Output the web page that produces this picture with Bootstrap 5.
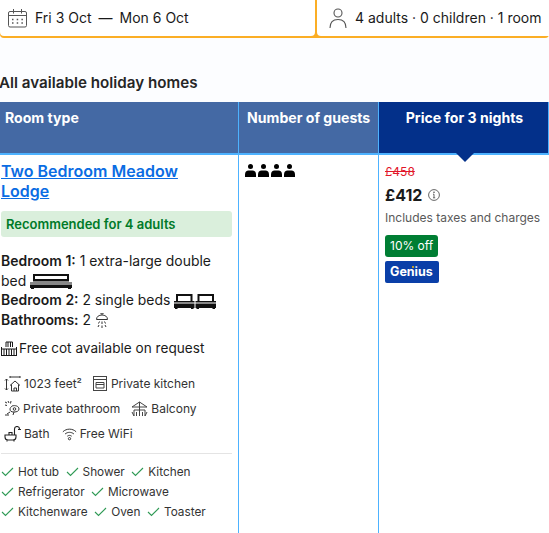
<!DOCTYPE html>
<html lang="en">
<head>
<meta charset="utf-8">
<title>Holiday homes</title>
<link href="https://cdn.jsdelivr.net/npm/bootstrap@5.3.0/dist/css/bootstrap.min.css" rel="stylesheet">
<style>
html,body{margin:0;height:533px;overflow:hidden}
body{font-family:Inter,"Liberation Sans",sans-serif;background:#fcfdff;color:#1a1a1a;font-size:14px;line-height:20px;width:549px}
svg{display:inline-block;flex:none}
.topbar{height:38px;background:#fbae25;padding-bottom:2px;gap:2px;color:#1a1a1a;border-radius:0 0 4px 4px}
.seg-a{width:315px;padding-left:8px;gap:8px;background:#fff;border-radius:0 0 4px 4px}
.seg-b{flex:1;padding-left:12px;gap:8px;white-space:nowrap;background:#fff;border-radius:0 0 0 4px}
.dash{margin:0 7px}
.heading{font-size:15.2px;line-height:20px;font-weight:600;color:#262626;margin:35px 0 9px -1px;white-space:nowrap;height:20px}
.tbl{display:grid;grid-template-columns:239px 140px 170px;grid-template-rows:53px 378px}
.cell{border-right:1px solid #4db2ff;min-width:0;position:relative}
.cell:last-child{border-right:0}
.hd{background:#4469a4;color:#fff;font-weight:700;font-size:14.1px;line-height:20px;padding:6px 5px;border-bottom:2px solid #4db2ff;white-space:nowrap}
.hd-guests{padding-left:8px}
.hd-price{background:#03308a;text-align:center;padding-left:6px;padding-right:4px;z-index:1}
.notch{position:absolute;left:77px;bottom:-9px;width:0;height:0;border-left:9px solid transparent;border-right:9px solid transparent;border-top:9px solid #03308a}
.body-cell{background:#fff}
.col-room{padding:6px 6px 0 1px}
.room-link{font-size:16px;line-height:20px;font-weight:600;color:#0a6ce3;text-decoration:underline;display:block;width:190px}
.reco{background:#daefdc;color:#007a28;font-weight:600;font-size:13px;line-height:26px;height:26px;border-radius:3px;padding-left:5px;margin:10px 0 14px}
.beds{font-size:13.95px;line-height:19.5px}
.beds b{font-weight:600}
.cot{margin-top:9px;display:flex;align-items:center;gap:2px;white-space:nowrap;font-size:13.6px}
.facts{margin-top:13px;font-size:12px;line-height:25px;color:#333;padding-left:3px}
.fact-row{display:flex;gap:11px;white-space:nowrap}
.fact{display:flex;align-items:center;gap:3px}
.kitchen-label{margin-left:1px}
.wifi-item{margin-left:1px}
.rule{border-top:1px solid #e4e4e4;margin:7px 0 8px}
.ticks{font-size:11.8px;line-height:20px;color:#333}
.tick-row{display:flex;gap:6.5px;white-space:nowrap}
.tick{display:flex;align-items:center;gap:4px}
.col-guests{padding:9px 0 0 6px;display:flex;align-items:flex-start;gap:2px}
.col-price{padding:8px 0 0 6px}
.old{color:#e2162a;font-size:12px;line-height:17px;text-decoration:line-through}
.now{font-size:16px;line-height:22px;font-weight:700;color:#1a1a1a;margin-top:4px;gap:6px}
.taxes{font-size:12px;line-height:18px;color:#595959;margin-top:3px}
.off{display:table;background:#007e33;color:#fff;font-size:12px;line-height:22px;padding:0 5px;border-radius:3px;margin-top:8px}
.gen{display:table;position:relative;background:#0a3fa8;color:#fff;font-size:12.5px;line-height:22px;font-weight:700;padding:0 5px;border-radius:2px;margin-top:4px;width:54px}
.gen-dot{position:absolute;left:27px;top:5px;width:2px;height:2px;border-radius:50%;background:#febb02}
</style>
</head>
<body>
<div class="topbar d-flex">
  <div class="seg-a d-flex align-items-center">
    <svg width="19" height="20" viewBox="0 0 19 20" fill="none" stroke="#555" stroke-width="1"><rect x=".5" y="3.500" width="18" height="15.500" rx="1.500"/><path d="M.5 7.500h18M5.500 1v4.500M13.500 1v4.500"/><path d="M4 11.500h1.500M8.700 11.500h1.500M13.400 11.500h1.500M4 15h1.500M8.700 15h1.500M13.400 15h1.500" stroke-width="1.300"/></svg>
    <span>Fri 3 Oct<span class="dash">—</span>Mon 6 Oct</span>
  </div>
  <div class="seg-b d-flex align-items-center">
    <svg width="18" height="22" viewBox="0 0 18 22" fill="none" stroke="#555" stroke-width="1.100"><circle cx="9" cy="6" r="4"/><path d="M1 21c0-6 3-8.500 8-8.500s8 2.500 8 8.500"/></svg>
    <span>4 adults · 0 children · 1 room</span>
  </div>
</div>
<h2 class="heading">All available holiday homes</h2>
<div class="tbl">
  <div class="cell hd">Room type</div>
  <div class="cell hd hd-guests">Number of guests</div>
  <div class="cell hd hd-price">Price for 3 nights<span class="notch"></span></div>

  <div class="cell body-cell col-room">
    <a class="room-link" href="#">Two Bedroom Meadow Lodge</a>
    <div class="reco">Recommended for 4 adults</div>
    <div class="beds">
      <b>Bedroom 1:</b> 1 extra-large double<br>bed
      <svg width="42" height="15" viewBox="0 0 42 15" fill="#111"><path d="M3 0h36v2H3zM3 1h2v6H3zM37 1h2v6h-2zM3 5h36v2.500H3zM0 8.500h42v1H0zM0 10.500h42V14H0zM1 13h3v2H1zM38 13h3v2h-3z"/></svg><br>
      <b>Bedroom 2:</b> 2 single beds
      <svg width="42" height="15" viewBox="0 0 42 15" fill="#111"><path d="M2 0h16.500v2H2zM2 1h2v6H2zM16.500 1h2v6h-2zM0 7h20.500v1.500H0zM0 9.500h20.500V14H0zM1 13h2.500v2H1zM17 13h2.500v2H17zM23.500 0H40v2H23.500zM23.500 1h2v6h-2zM38 1h2v6h-2zM21.500 7H42v1.500H21.500zM21.500 9.500H42V14H21.500zM22.500 13H25v2h-2.500zM38.500 13H41v2h-2.500z"/></svg><br>
      <b>Bathrooms:</b> 2
      <svg width="14" height="15" viewBox="0 0 14 15" fill="none" stroke="#333" stroke-width="1"><path d="M5 0h4M7 0v2M1.500 6.500C1.500 3.500 4 2 7 2s5.500 1.500 5.500 4.500zM4.500 8.500l-1 2M4 12l-1 2M7 8.500V11M7 12.500V15M9.500 8.500l1 2M10 12l1 2"/></svg>
    </div>
    <div class="cot">
      <svg width="16" height="15" viewBox="0 0 16 15" fill="none" stroke="#1a1a1a" stroke-width="1"><path d="M.5 6v9M15.500 6v9M.5 8h15M.5 14.500h15M3 8v6M5.500 8v6M8 8v6M10.500 8v6M13 8v6M5 6V1h6.500v5M7 1v5M9.500 1v5"/></svg>
      <span>Free cot available on request</span>
    </div>
    <div class="facts">
      <div class="fact-row">
        <span class="fact"><svg width="17" height="16" viewBox="0 0 17 16" fill="none" stroke="#333" stroke-width="1"><path d="M2.500 3v11M1 4.500 2.500 3 4 4.500M1 12.500 2.500 14 4 12.500M6 1h10M6 0v2M16 0v2M6 9.500 11 5l5 4.500M7.500 8.500V15h7V8.500M10 15v-3h2.500v3"/></svg>1023 feet²</span>
        <span class="fact"><svg width="14" height="15" viewBox="0 0 14 15" fill="none" stroke="#444" stroke-width="1"><rect x=".5" y=".5" width="13" height="14"/><path d="M.5 3.500h13M3 6.500h8v5.500H3zM3 8.500h8"/></svg><span class="kitchen-label">Private kitchen</span></span>
      </div>
      <div class="fact-row">
        <span class="fact"><svg width="16" height="15" viewBox="0 0 16 15" fill="none" stroke="#333" stroke-width="1"><path d="M1 1l2 1M4 0l1 2M7 0 6.500 2.500M1 4l2 .5M8 5c3-1 7 0 7 3 0 2-2 3-5 3-3 0-4-1-4-3 0-1 1-2 2-3zM6 11l-3 2M10 11l-1 3M5 14H1"/><circle cx="10.500" cy="8" r="1.300"/></svg>Private bathroom</span>
        <span class="fact"><svg width="17" height="16" viewBox="0 0 17 16" fill="none" stroke="#444" stroke-width="1"><path d="M1 6 8.500 1 16 6zM8.500 1v14M3 9h11M3 9v6M14 9v6M5.500 11v4M11.500 11v4M1 11l2 4M16 11l-2 4"/></svg>Balcony</span>
      </div>
      <div class="fact-row">
        <span class="fact"><svg width="17" height="16" viewBox="0 0 17 16" fill="none" stroke="#222" stroke-width="1.100"><path d="M1 9h11v2c0 2-1 3-3 3H4c-2 0-3-1-3-3zM3 14v1.500M10 14v1.500M10.500 9V3c0-1.500 1-2.500 2.500-2.500S15.500 1.500 15.500 3M14 3.500h3M5 9V6.500h3V9"/></svg>Bath</span>
        <span class="fact wifi-item"><svg width="15" height="14" viewBox="0 0 17 15" fill="none" stroke="#333" stroke-width="1.100"><path d="M1 5c4-4 11-4 15 0M3.500 7.500c3-2.500 7-2.500 10 0M6 10c1.500-1.200 3.500-1.200 5 0"/><circle cx="8.500" cy="12.800" r="1.300"/></svg>Free WiFi</span>
      </div>
    </div>
    <div class="rule"></div>
    <div class="ticks">
      <div class="tick-row">
        <span class="tick"><svg width="13" height="10" viewBox="0 0 13 10" fill="none" stroke="#2f9a55" stroke-width="1.100"><path d="M1 5l3.500 3.500L12 1"/></svg>Hot tub</span>
        <span class="tick"><svg width="13" height="10" viewBox="0 0 13 10" fill="none" stroke="#2f9a55" stroke-width="1.100"><path d="M1 5l3.500 3.500L12 1"/></svg>Shower</span>
        <span class="tick"><svg width="13" height="10" viewBox="0 0 13 10" fill="none" stroke="#2f9a55" stroke-width="1.100"><path d="M1 5l3.500 3.500L12 1"/></svg>Kitchen</span>
      </div>
      <div class="tick-row">
        <span class="tick"><svg width="13" height="10" viewBox="0 0 13 10" fill="none" stroke="#2f9a55" stroke-width="1.100"><path d="M1 5l3.500 3.500L12 1"/></svg>Refrigerator</span>
        <span class="tick"><svg width="13" height="10" viewBox="0 0 13 10" fill="none" stroke="#2f9a55" stroke-width="1.100"><path d="M1 5l3.500 3.500L12 1"/></svg>Microwave</span>
      </div>
      <div class="tick-row">
        <span class="tick"><svg width="13" height="10" viewBox="0 0 13 10" fill="none" stroke="#2f9a55" stroke-width="1.100"><path d="M1 5l3.500 3.500L12 1"/></svg>Kitchenware</span>
        <span class="tick"><svg width="13" height="10" viewBox="0 0 13 10" fill="none" stroke="#2f9a55" stroke-width="1.100"><path d="M1 5l3.500 3.500L12 1"/></svg>Oven</span>
        <span class="tick"><svg width="13" height="10" viewBox="0 0 13 10" fill="none" stroke="#2f9a55" stroke-width="1.100"><path d="M1 5l3.500 3.500L12 1"/></svg>Toaster</span>
      </div>
    </div>
  </div>

  <div class="cell body-cell col-guests">
    <svg width="11" height="13" viewBox="0 0 11 13" fill="#000"><circle cx="5.500" cy="2.600" r="2.500"/><path d="M0 13v-2.500C0 8 1.500 6.500 3.500 6.500h4c2 0 3.500 1.500 3.500 4V13z"/></svg>
    <svg width="11" height="13" viewBox="0 0 11 13" fill="#000"><circle cx="5.500" cy="2.600" r="2.500"/><path d="M0 13v-2.500C0 8 1.500 6.500 3.500 6.500h4c2 0 3.500 1.500 3.500 4V13z"/></svg>
    <svg width="11" height="13" viewBox="0 0 11 13" fill="#000"><circle cx="5.500" cy="2.600" r="2.500"/><path d="M0 13v-2.500C0 8 1.500 6.500 3.500 6.500h4c2 0 3.500 1.500 3.500 4V13z"/></svg>
    <svg width="11" height="13" viewBox="0 0 11 13" fill="#000"><circle cx="5.500" cy="2.600" r="2.500"/><path d="M0 13v-2.500C0 8 1.500 6.500 3.500 6.500h4c2 0 3.500 1.500 3.500 4V13z"/></svg>
  </div>

  <div class="cell body-cell col-price">
    <div class="old">£458</div>
    <div class="now d-flex align-items-center">£412
      <svg width="12" height="12" viewBox="0 0 12 12" fill="none" stroke="#555" stroke-width=".9"><circle cx="6" cy="6" r="5.400"/><path d="M6 5.200v3.600M5 5.200h1M5 8.800h2.200"/><circle cx="6" cy="3.200" r=".4" fill="#555"/></svg>
    </div>
    <div class="taxes">Includes taxes and charges</div>
    <span class="off">10% off</span>
    <span class="gen">Genius<span class="gen-dot"></span></span>
  </div>
</div>
</body>
</html>
